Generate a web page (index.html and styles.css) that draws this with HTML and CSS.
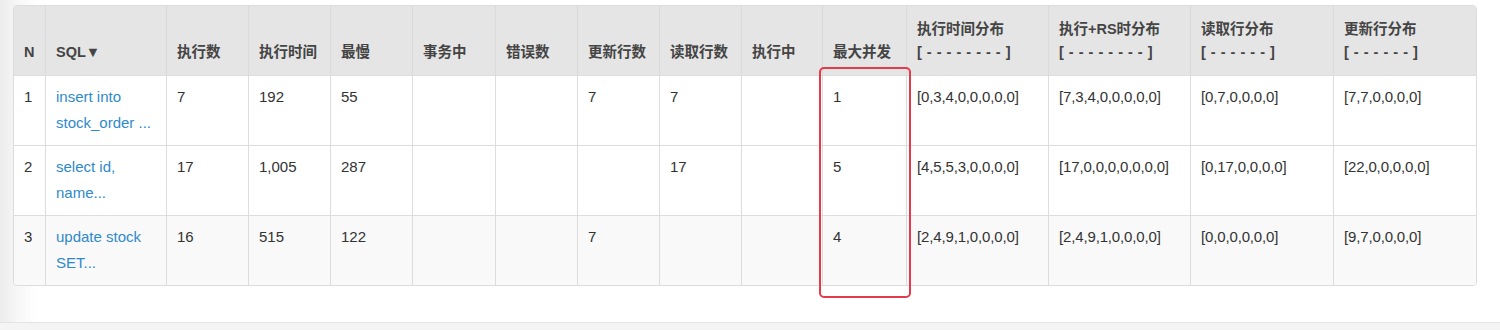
FILE: index.html
```html
<!DOCTYPE html>
<html lang="zh">
<head>
<meta charset="utf-8">
<title>SQL 监控</title>
<link rel="stylesheet" href="styles.css">
</head>
<body>
<div class="page">
  <div class="panel">
    <table class="sql-table">
      <colgroup>
        <col class="c-n"><col class="c-sql"><col class="c-82"><col class="c-82"><col class="c-82"><col class="c-83"><col class="c-82"><col class="c-82"><col class="c-82"><col class="c-81"><col class="c-84"><col class="c-142"><col class="c-142"><col class="c-143"><col class="c-144">
      </colgroup>
      <thead>
        <tr>
          <th>N</th>
          <th>SQL▼</th>
          <th>执行数</th>
          <th>执行时间</th>
          <th>最慢</th>
          <th>事务中</th>
          <th>错误数</th>
          <th>更新行数</th>
          <th>读取行数</th>
          <th>执行中</th>
          <th>最大并发</th>
          <th>执行时间分布<br><span class="scale">[ - - - - - - - - ]</span></th>
          <th>执行+RS时分布<br><span class="scale">[ - - - - - - - - ]</span></th>
          <th>读取行分布<br><span class="scale">[ - - - - - - ]</span></th>
          <th>更新行分布<br><span class="scale">[ - - - - - - ]</span></th>
        </tr>
      </thead>
      <tbody>
        <tr>
          <td>1</td>
          <td><a class="sql-link" href="#">insert into<br>stock_order ...</a></td>
          <td>7</td><td>192</td><td>55</td><td></td><td></td><td>7</td><td>7</td><td></td><td>1</td>
          <td class="dist">[0,3,4,0,0,0,0,0]</td>
          <td class="dist">[7,3,4,0,0,0,0,0]</td>
          <td class="dist">[0,7,0,0,0,0]</td>
          <td class="dist">[7,7,0,0,0,0]</td>
        </tr>
        <tr>
          <td>2</td>
          <td><a class="sql-link" href="#">select id,<br>name...</a></td>
          <td>17</td><td>1,005</td><td>287</td><td></td><td></td><td></td><td>17</td><td></td><td>5</td>
          <td class="dist">[4,5,5,3,0,0,0,0]</td>
          <td class="dist">[17,0,0,0,0,0,0,0]</td>
          <td class="dist">[0,17,0,0,0,0]</td>
          <td class="dist">[22,0,0,0,0,0]</td>
        </tr>
        <tr class="alt">
          <td>3</td>
          <td><a class="sql-link" href="#">update stock<br>SET...</a></td>
          <td>16</td><td>515</td><td>122</td><td></td><td></td><td>7</td><td></td><td></td><td>4</td>
          <td class="dist">[2,4,9,1,0,0,0,0]</td>
          <td class="dist">[2,4,9,1,0,0,0,0]</td>
          <td class="dist">[0,0,0,0,0,0]</td>
          <td class="dist">[9,7,0,0,0,0]</td>
        </tr>
      </tbody>
    </table>
    <div class="highlight"></div>
  </div>
  <div class="footer-band"></div>
</div>
</body>
</html>
```

FILE: styles.css
```css
html, body {
  margin: 0;
  padding: 0;
}
body {
  background: linear-gradient(to right, #ececec 0px, #f7f7f7 18px, #ffffff 38px);
  font-family: "Liberation Sans", "Noto Sans CJK SC", sans-serif;
  font-size: 15px;
  color: #333;
  height: 330px;
  overflow: hidden;
}
.page {
  padding-top: 5px;
}
.panel {
  position: relative;
  margin-left: 13px;
  width: 1464px;
  border: 1px solid #dcdcdc;
  border-radius: 4px;
  box-sizing: border-box;
}
.sql-table {
  width: 100%;
  table-layout: fixed;
  border-collapse: separate;
  border-spacing: 0;
}
.c-n { width: 31px; }
.c-sql { width: 121px; }
.c-81 { width: 81px; }
.c-82 { width: 82px; }
.c-83 { width: 83px; }
.c-84 { width: 84px; }
.c-142 { width: 142px; }
.c-143 { width: 143px; }
.c-144 { width: 143px; }

.sql-table th {
  background: #e5e5e5;
  color: #444;
  font-size: 14.5px;
  font-weight: bold;
  text-align: left;
  vertical-align: bottom;
  line-height: 23px;
  padding: 8px 10px 11px 10px;
  height: 69px;
  box-sizing: border-box;
  border-left: 1px solid #dadada;
  white-space: nowrap;
}
.sql-table th:first-child {
  border-left: none;
  border-top-left-radius: 3px;
}
.sql-table th:last-child {
  border-top-right-radius: 3px;
}
.scale {
  word-spacing: 1px;
}
.sql-table td {
  background: #ffffff;
  vertical-align: top;
  line-height: 26px;
  padding: 8px 10px;
  height: 70px;
  box-sizing: border-box;
  border-top: 1px solid #dddddd;
  border-left: 1px solid #dddddd;
  white-space: nowrap;
}
.sql-table td:first-child {
  border-left: none;
}
.sql-table tr.alt td {
  background: #f9f9f9;
}
.sql-table tr.alt td:first-child {
  border-bottom-left-radius: 3px;
}
.sql-table tr.alt td:last-child {
  border-bottom-right-radius: 3px;
}
.sql-table td.dist {
  letter-spacing: -0.15px;
}
.sql-link {
  color: #2f8acb;
  text-decoration: none;
}
.highlight {
  position: absolute;
  left: 805px;
  top: 61px;
  width: 92px;
  height: 231px;
  box-sizing: border-box;
  border: 2.5px solid #e33b4b;
  border-radius: 5px;
  pointer-events: none;
}
.footer-band {
  margin-top: 36px;
  height: 10px;
  background: #f4f4f4;
  border-top: 1px solid #e4e4e4;
}
```
